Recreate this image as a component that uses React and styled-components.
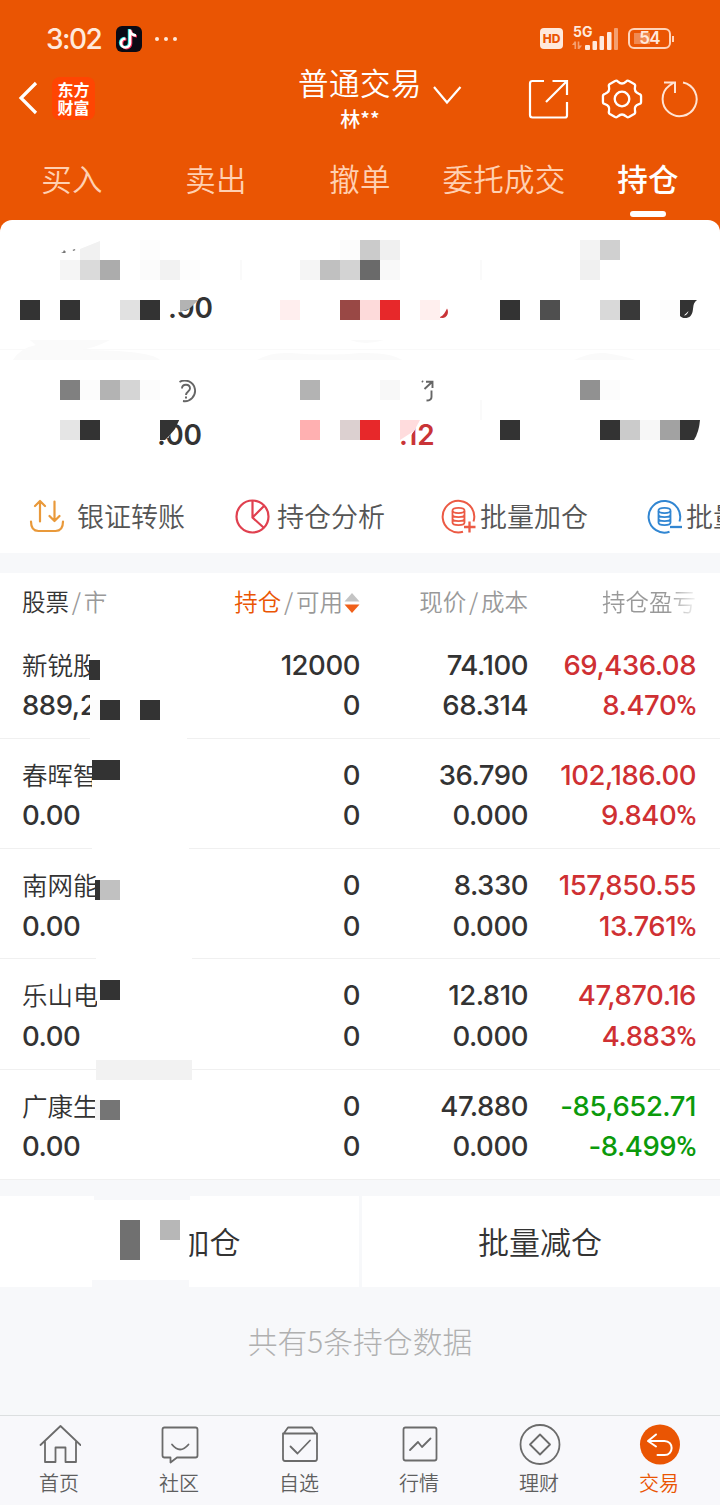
import styled, {createGlobalStyle, css} from "styled-components";
import {useState} from "react";

const GlobalStyle = createGlobalStyle`
    * {
        box-sizing: border-box;
    }

    body {
        margin: 0;
        background: #f7f8fa;
        font-family: "Noto Sans CJK SC", sans-serif;
        color: #333;
    }
`;

const ORANGE = "#ea5503";

const tabs = ["买入", "卖出", "撤单", "委托成交", "持仓"];

// c / r are cells of the 20px mosaic grid, counted from 1
const stats = [
    [
        {
            tiles: [
                {c: 5, r: 2, bg: "#f1f1f1", clip: "polygon(0 45%, 100% 5%, 100% 100%, 0 100%)"},
                {c: 8, r: 2, bg: "#fdfdfd"},
                {c: 4, r: 3, bg: "#f5f5f5"}, {c: 5, r: 3, bg: "#dadada"}, {c: 6, r: 3, bg: "#acacac"},
                {c: 8, r: 3, bg: "#fbfbfb"}, {c: 9, r: 3, bg: "#f2f2f2"}, {c: 10, r: 3, bg: "#fdfdfd"},
                {c: 2, r: 5, bg: "#333"}, {c: 4, r: 5, bg: "#333"}, {c: 7, r: 5, bg: "#e1e1e1"}, {c: 8, r: 5, bg: "#333"},
                {c: 10, r: 5, bg: "#b3b3b3", clip: "polygon(0 0, 92% 0, 45% 45%, 0 60%)"}
            ],
            specks: true,
            value: {text: ".90", c: 9, r: 5, left: 8, clip: "polygon(0 100%, 0 55%, 35% 57%, 60% 28%, 60% 0, 100% 0, 100% 100%)"}
        },
        {
            tiles: [
                {c: 6, r: 2, bg: "#fcfcfc"}, {c: 7, r: 2, bg: "#cbcbcb"}, {c: 8, r: 2, bg: "#f0f0f0"},
                {c: 4, r: 3, bg: "#f5f5f5"}, {c: 5, r: 3, bg: "#c0c0c0"}, {c: 6, r: 3, bg: "#d3d3d3"},
                {c: 7, r: 3, bg: "#6a6a6a"}, {c: 8, r: 3, bg: "#f9f9f9"},
                {c: 3, r: 5, bg: "#ffeeee"}, {c: 6, r: 5, bg: "#994845"}, {c: 7, r: 5, bg: "#fddada"},
                {c: 8, r: 5, bg: "#e7282a"}, {c: 10, r: 5, bg: "#ffefee"}
            ],
            tail: {c: 11, r: 5, d: "M-1 17.500 C3 16 5 13 7 8.500 C9 11.500 8 17 3 18 Z", fill: "#c93437"}
        },
        {
            tiles: [
                {c: 6, r: 2, bg: "#f3f3f3"}, {c: 7, r: 2, bg: "#d0d0d0"}, {c: 6, r: 3, bg: "#f0f0f0"},
                {c: 2, r: 5, bg: "#333"}, {c: 4, r: 5, bg: "#4f4f4f"}, {c: 7, r: 5, bg: "#d9d9d9"},
                {c: 8, r: 5, bg: "#393939"}, {c: 10, r: 5, bg: "#fdfdfd"}
            ],
            tail: {c: 11, r: 5, d: "M0 0 H17 C11 4 15 11 10.500 16 C7.500 19 2 18.500 0 16 Z M4 15.500 C6 15.500 8 13.500 8.500 11 C7 13 5 14 4 15.500 Z", fill: "#333"}
        }
    ],
    [
        {
            tiles: [
                {c: 4, r: 2, bg: "#808080"}, {c: 5, r: 2, bg: "#fcfcfc"}, {c: 6, r: 2, bg: "#b3b3b3"},
                {c: 7, r: 2, bg: "#d5d5d5"}, {c: 8, r: 2, bg: "#fcfcfc"},
                {c: 4, r: 4, bg: "#e5e5e5"}, {c: 5, r: 4, bg: "#333"},
                {c: 9, r: 4, bg: "#333", clip: "polygon(0 0, 96% 0, 75% 45%, 45% 80%, 25% 100%, 0 100%)"}
            ],
            icon: "help",
            value: {text: ".00", c: 8, r: 4, left: 17, clip: "polygon(0 100%, 0 60%, 25% 60%, 46% 0, 100% 0, 100% 100%)"}
        },
        {
            tiles: [
                {c: 4, r: 2, bg: "#b3b3b3"}, {c: 8, r: 2, bg: "#f8f8f8"},
                {c: 4, r: 4, bg: "#ffb0b1"}, {c: 6, r: 4, bg: "#dcd0d0"}, {c: 7, r: 4, bg: "#e7282a"},
                {c: 9, r: 4, bg: "#ffdcdd", clip: "polygon(0 0, 100% 0, 70% 55%, 0 100%)"}
            ],
            icon: "jump",
            value: {text: ".12", c: 8, r: 4, left: 19, red: true, clip: "polygon(0 100%, 0 66%, 25% 66%, 46% 30%, 46% 0, 100% 0, 100% 100%)"}
        },
        {
            tiles: [
                {c: 6, r: 2, bg: "#919191"}, {c: 7, r: 2, bg: "#fcfcfc"},
                {c: 2, r: 4, bg: "#333"}, {c: 7, r: 4, bg: "#333"}, {c: 8, r: 4, bg: "#cbcbcb"},
                {c: 9, r: 4, bg: "#f7f7f7"}, {c: 10, r: 4, bg: "#a2a2a2"}
            ],
            tail: {c: 11, r: 4, d: "M0 0 H20 Q19 12 14 20 H0 Z", fill: "#333"}
        }
    ]
];

const actions = [
    {label: "银证转账", icon: "transfer", gap: 13},
    {label: "持仓分析", icon: "pie", gap: 7},
    {label: "批量加仓", icon: "add", gap: 4},
    {label: "批量减仓", icon: "minus", gap: 4}
];

// masks: [left, top, width, height, colour] of the blocks hiding part of the first column
const holdings = [
    {
        name: "新锐股", value: "889,2", amount: "12000", usable: "0", price: "74.100", cost: "68.314", profit: "69,436.08", rate: "8.470",
        masks: [[90, 20, 97, 92, "#fff"], [89, 31, 11, 20, "#333"], [90, 71, 10, 20, "#fcfcfc"], [100, 71, 20, 20, "#333"], [140, 71, 20, 20, "#333"]]
    },
    {
        name: "春晖智", value: "0.00", amount: "0", usable: "0", price: "36.790", cost: "0.000", profit: "102,186.00", rate: "9.840",
        masks: [[92, 21, 97, 90, "#fff"], [92, 21, 28, 20, "#333"]]
    },
    {
        name: "南网能", value: "0.00", amount: "0", usable: "0", price: "8.330", cost: "0.000", profit: "157,850.55", rate: "13.761",
        masks: [[96, 21, 96, 90, "#fff"], [95, 31, 5, 20, "#333"], [100, 31, 20, 20, "#c1c1c1"]]
    },
    {
        name: "乐山电", value: "0.00", amount: "0", usable: "0", price: "12.810", cost: "0.000", profit: "47,870.16", rate: "4.883",
        masks: [[97, 20, 95, 80, "#fff"], [100, 21, 20, 20, "#333"], [96, 101, 96, 20, "#f2f2f2"]]
    },
    {
        name: "广康生", value: "0.00", amount: "0", usable: "0", price: "47.880", cost: "0.000", profit: "-85,652.71", rate: "-8.499", down: true,
        masks: [[95, 30, 5, 20, "#f5f5f5"], [100, 30, 20, 20, "#757575"], [94, 110, 96, 20, "#f7f8fa"]]
    }
];

const menu = [
    {label: "首页", icon: "home"},
    {label: "社区", icon: "chat"},
    {label: "自选", icon: "check"},
    {label: "行情", icon: "chart"},
    {label: "理财", icon: "coin"},
    {label: "交易", icon: "trade"}
];

// six teeth around the centre
const gearPath = () => {
    const pt = (deg, r) => {
        const a = deg * Math.PI / 180;
        return `${(21 + r * Math.cos(a)).toFixed(2)} ${(21 + r * Math.sin(a)).toFixed(2)}`;
    };
    let d = `M${pt(-9, 19.3)}`;
    for (let i = 0; i < 6; i++) {
        const a = i * 60;
        d += ` L${pt(a + 9, 19.3)} Q${pt(a + 14, 19.6)} ${pt(a + 17, 17.8)} Q${pt(a + 30, 13.6)} ${pt(a + 43, 17.8)} Q${pt(a + 46, 19.6)} ${pt(a + 51, 19.3)}`;
    }
    return d + "Z";
};

function StatusBar() {
    return (
        <Status>
            <Clock>3:02</Clock>
            <svg width="26" height="26" viewBox="0 0 26 26">
                <rect width="26" height="26" rx="6" fill="#0b0a14"/>
                <g fill="none" strokeWidth="2.600">
                    <path d="M14 3.500V17a4.500 4.500 0 1 1-4.500-4.500M14 4.500c.6 3 2.500 4.800 6 5" stroke="#25e5e0" transform="translate(-.9 -.4)"/>
                    <path d="M14 3.500V17a4.500 4.500 0 1 1-4.500-4.500M14 4.500c.6 3 2.500 4.800 6 5" stroke="#f5305c" transform="translate(1 .7)"/>
                    <path d="M14 3.500V17a4.500 4.500 0 1 1-4.500-4.500M14 4.500c.6 3 2.500 4.800 6 5" stroke="#fff"/>
                </g>
            </svg>
            <Dots><i/><i/><i/></Dots>
            <Spacer/>
            <HdBadge>HD</HdBadge>
            <Network>
                <b>5G</b>
                <svg width="46" height="24" viewBox="0 0 46 24" fill="#ffe9dc">
                    <g opacity=".5">
                        <path d="M2.500 14.500h1.600v7.500H2.500zM0 18l3-4v4zM5.700 14.500h1.600v7.500H5.700zM7 18.500h3l-3 4z"/>
                        <rect x="42" y="1" width="4" height="22" rx="1"/>
                    </g>
                    <rect x="13" y="18" width="5" height="5" rx="1"/>
                    <rect x="20.500" y="14" width="4.500" height="9" rx="1"/>
                    <rect x="27.500" y="9" width="4.500" height="14" rx="1"/>
                    <rect x="35" y="5" width="4.500" height="18" rx="1"/>
                </svg>
            </Network>
            <Battery><span>54</span></Battery>
        </Status>
    );
}

function ActionIcon({name}) {
    if (name === "transfer") {
        return (
            <svg width="36" height="36" viewBox="0 0 36 36" fill="none" stroke="#e9993a" strokeWidth="2.200" strokeLinecap="round" strokeLinejoin="round">
                <path d="M11 22.500V2.500M6 7l5-5 5 5M25.500 2.500v19M20.500 17l5 5 5-5"/>
                <path d="M2 22.500c0 6 2.500 9.500 7.500 9.500h17c5 0 7.500-3.500 7.500-9.500"/>
            </svg>
        );
    }
    if (name === "pie") {
        return (
            <svg width="36" height="36" viewBox="0 0 36 36" fill="none" stroke="#e0404f" strokeWidth="2.200">
                <circle cx="17.500" cy="17.500" r="16"/>
                <path d="M17.500 2v16.500L28.500 28.500M17.500 18.500L29 7"/>
            </svg>
        );
    }
    const color = name === "add" ? "#ec5a44" : "#3186d2";
    return (
        <svg width="36" height="36" viewBox="0 0 36 36" fill="none" stroke={color} strokeWidth="2">
            <path d={name === "add" ? "M32.500 22.500A15.800 15.800 0 1 0 22 32.800" : "M32.500 22.500A15.800 15.800 0 1 0 22.500 32.800"}/>
            <g strokeWidth="1.800">
                <ellipse cx="17.500" cy="11.500" rx="6" ry="2.600"/>
                <path d="M11.500 12v11.500c0 3.500 12 3.500 12 0V12M11.500 15.500c0 3.500 12 3.500 12 0M11.500 19.500c0 3.500 12 3.500 12 0"/>
            </g>
            {name === "add" ? <path d="M28.500 22.500v11M23 28h11.500" strokeWidth="2.300"/> : <path d="M23 28h12" strokeWidth="2.300"/>}
        </svg>
    );
}

function MenuIcon({name}) {
    const paths = {
        home: <path d="M1.500 22L21.500 3l20 19M6 18.500V39h10.500V24.500h10V39H37V18.500"/>,
        chat: <path d="M5.500 4.500h31q2 0 2 2v26q0 2-2 2H18l-6.500 5v-5h-6q-2 0-2-2v-26q0-2 2-2zM13 21.500q8 10 16.500 0"/>,
        check: <path d="M4 11.500l5-7h24l5 7M4 10.500h34M4 10.500v25q0 2.500 2 2.500h30q2 0 2-2.500v-25M11.500 23.500l7 7L31 17.500"/>,
        chart: <path d="M6.500 4.500h29q2 0 2 2v29q0 2-2 2h-29q-2 0-2-2v-29q0-2 2-2zM11 27l8-8 4 5 8.500-8.500"/>,
        coin: <path d="M21 2a19.200 19.200 0 1 1 0 39 19.200 19.200 0 1 1 0-39M21 11.500L31 21.500 21 31.500 11 21.500z"/>
    };
    if (name === "trade") {
        return (
            <svg width="42" height="42" viewBox="0 0 42 42" fill="none" stroke="#fff" strokeWidth="2" strokeLinecap="round" strokeLinejoin="round">
                <circle cx="21" cy="21.500" r="20" fill={ORANGE} stroke="none"/>
                <path d="M17 11.500l-8 6.500 8 5.500M10 18h15.500c9.500 0 9.500 14 0 14H18.500"/>
            </svg>
        );
    }
    return (
        <svg width="42" height="42" viewBox="0 0 42 42" fill="none" stroke="#6b6b6b" strokeWidth="1.800" strokeLinejoin="round" strokeLinecap="round">
            {paths[name]}
        </svg>
    );
}

function Stat({stat, split}) {
    const {tiles, value, tail, icon, specks} = stat;
    return (
        <StatGrid>
            {split && <Split/>}
            {value && <StatValue $c={value.c} $r={value.r} $left={value.left} $red={value.red} $clip={value.clip}>{value.text}</StatValue>}
            {tiles.map((t, idx) => <Tile key={idx} $c={t.c} $r={t.r} $bg={t.bg} $clip={t.clip}/>)}
            {tail && <Cell $c={tail.c} $r={tail.r}>
                <svg width="20" height="20" viewBox="0 0 20 20"><path d={tail.d} fill={tail.fill} fillRule="evenodd"/></svg>
            </Cell>}
            {specks && <Cell $c={4} $r={2}>
                <svg width="20" height="20" viewBox="0 0 20 20"><path d="M1 13l2-1 1-2 2 2-1 1zM12.500 10l2-1 1 1-2 1z" fill="#777"/></svg>
            </Cell>}
            {icon === "help" && <Cell $c={9} $r={2}>
                <svg width="38" height="24" viewBox="0 0 38 24" fill="none" stroke="#666" strokeWidth="1.900">
                    <path d="M19.500 2A10.300 10.300 0 1 1 23 21"/>
                    <path d="M22 8.500c0-5 8-5 8 0 0 3-4 3-4 6.500"/>
                    <path d="M25 17.500h2"/>
                </svg>
            </Cell>}
            {icon === "jump" && <Cell $c={10} $r={2}>
                <svg width="20" height="24" viewBox="0 0 20 24" fill="none" stroke="#666" strokeWidth="1.900">
                    <path d="M4.500 9l7.500-7M6 1.800h6.500V8M11.500 10.500v6.500q0 3.500-5 3.500M2 1l1 1"/>
                </svg>
            </Cell>}
        </StatGrid>
    );
}

export default function App() {
    const [tab, setTab] = useState("持仓");
    const [page, setPage] = useState("交易");
    return (
        <Phone>
            <GlobalStyle/>
            <Header>
                <StatusBar/>
                <NavBar>
                    <NavSide>
                        <svg width="20" height="34" viewBox="0 0 20 34" fill="none" stroke="#fff" strokeWidth="3.200">
                            <path d="M18 2L3 17l15 15"/>
                        </svg>
                        <Logo><span>东方</span><span>财富</span></Logo>
                    </NavSide>
                    <Account>
                        <div>
                            <h1>普通交易</h1>
                            <p>林**</p>
                        </div>
                        <svg width="30" height="20" viewBox="0 0 30 20" fill="none" stroke="#fff" strokeWidth="2.200">
                            <path d="M2 2l13 15.500L28.500 2"/>
                        </svg>
                    </Account>
                    <NavSide $end>
                        <svg width="42" height="42" viewBox="0 0 42 42" fill="none" stroke="#fff" strokeWidth="2.200">
                            <path d="M17 3H5.500Q3 3 3 5.500V37q0 2.500 2.500 2.500H38q2 0 2-2V24M25.500 3H40v14M40 3L19 24"/>
                        </svg>
                        <svg width="42" height="42" viewBox="0 0 42 42" fill="none" stroke="#fff" strokeWidth="2.300" strokeLinejoin="round">
                            <path d={gearPath()}/>
                            <circle cx="21" cy="21" r="7.300"/>
                        </svg>
                        <svg width="38" height="42" viewBox="0 0 38 42" fill="none" stroke="#ffe3d3" strokeWidth="2">
                            <path d="M23 4.500A17 17 0 1 1 9.500 7.500L14 4.500M4 4.500h11V15"/>
                        </svg>
                    </NavSide>
                </NavBar>
                <Tabs>
                    {tabs.map((t) => (
                        <Tab key={t} $active={t === tab} onClick={() => setTab(t)}>{t}</Tab>
                    ))}
                </Tabs>
            </Header>
            <Summary>
                {stats.map((row, idx) => (
                    <StatRow key={idx} $last={idx === 1}>
                        {row.map((stat, i) => <Stat key={i} stat={stat} split={idx === 0 ? i > 0 : i > 1}/>)}
                    </StatRow>
                ))}
                <Smudges width="720" height="20" viewBox="0 0 720 20" fill="#fafafa">
                    <path d="M30 0H110Q95 8 80 10Q150 10 160 20H13Q20 8 36 5Z"/>
                    <path d="M257 20Q270 12 290 13Q330 16 360 13Q390 12 402 20ZM350 0H384Q365 6 350 0Z"/>
                    <path d="M574 20Q590 12 605 13Q625 16 635 20Z"/>
                </Smudges>
            </Summary>
            <Actions>
                {actions.map((a) => (
                    <Action key={a.label} $gap={a.gap}>
                        <ActionIcon name={a.icon}/>
                        <span>{a.label}</span>
                    </Action>
                ))}
            </Actions>
            <Table>
                <TableHead>
                    <HeadCell $left><em>股票</em><i>/</i><Cut>市</Cut></HeadCell>
                    <HeadCell><strong>持仓</strong><i>/</i>可用
                        <svg width="16" height="20" viewBox="0 0 16 20">
                            <path d="M8 0l7.500 8.500H.5z" fill="#c4c4c4"/>
                            <path d="M8 20l7.500-8.500H.5z" fill="#f0601a"/>
                        </svg>
                    </HeadCell>
                    <HeadCell>现价<i>/</i>成本</HeadCell>
                    <HeadCell><Fade>持仓盈亏</Fade></HeadCell>
                </TableHead>
                {holdings.map((h) => (
                    <Row key={h.name}>
                        <Pair $left><Name>{h.name}</Name><span>{h.value}</span></Pair>
                        <Pair><span>{h.amount}</span><span>{h.usable}</span></Pair>
                        <Pair><span>{h.price}</span><span>{h.cost}</span></Pair>
                        <Pair $color={h.down ? "#0b9a0b" : "#cf3033"}><span>{h.profit}</span><span>{h.rate}<Percent>%</Percent></span></Pair>
                        {h.masks.map(([x, y, w, hh, bg]) => <Mask key={`${x}-${y}-${w}`} $x={x} $y={y} $w={w} $h={hh} $bg={bg}/>)}
                    </Row>
                ))}
            </Table>
            <Buttons>
                <BigButton>
                    <Clipped>批量加仓</Clipped>
                    <Mask $x={120} $y={24} $w={20} $h={40} $bg="#707070"/>
                    <Mask $x={160} $y={24} $w={20} $h={20} $bg="#b7b7b7"/>
                    <Mask $x={92} $y={84} $w={97} $h={7} $bg="#f7f8fa"/>
                </BigButton>
                <BigButton>批量减仓</BigButton>
            </Buttons>
            <Total>共有5条持仓数据</Total>
            <Menu>
                {menu.map((m) => (
                    <MenuItem key={m.label} $active={m.label === page} onClick={() => setPage(m.label)}>
                        <MenuIcon name={m.icon}/>
                        <span>{m.label}</span>
                    </MenuItem>
                ))}
            </Menu>
        </Phone>
    );
}

const Phone = styled.div`
    width: 720px;
    height: 1505px;
    display: flex;
    flex-direction: column;
    overflow: hidden;
    background: #f7f8fa;
`;

const Header = styled.header`
    height: 232px;
    flex: none;
    background: ${ORANGE};
    color: #fff;
`;

const Status = styled.div`
    height: 66px;
    padding: 12px 49px 0 46px;
    display: flex;
    align-items: center;
    color: #ffe9dc;
`;

const Clock = styled.span`
    width: 70px;
    font: 500 28px "Inter", sans-serif;
    letter-spacing: -1.5px;
`;

const Dots = styled.div`
    display: flex;
    gap: 5px;
    margin-left: 13px;

    i {
        width: 4px;
        height: 4px;
        border-radius: 50%;
        background: #ffe9dc;
    }
`;

const Spacer = styled.div`
    flex: 1;
`;

const HdBadge = styled.div`
    width: 23px;
    height: 21px;
    margin-top: -1px;
    border-radius: 4px;
    background: #ffe9dc;
    color: ${ORANGE};
    font: 800 12px/21px "Inter", sans-serif;
    text-align: center;
`;

const Network = styled.div`
    position: relative;
    height: 24px;
    margin: 0 10px 0 9px;

    b {
        position: absolute;
        left: 1px;
        top: -3px;
        font: 700 14px/16px "Inter", sans-serif;
    }
`;

const Battery = styled.div`
    position: relative;
    width: 43px;
    height: 21px;
    margin-top: -1px;
    border: 2px solid #ffd3b9;
    border-radius: 6px;
    display: flex;
    align-items: center;
    justify-content: center;
    background: linear-gradient(90deg, #f08a52 0 50%, transparent 50%) 4px 3px / 32px 11px no-repeat;
    font: 600 17px/17px "Inter", sans-serif;
    letter-spacing: -0.8px;

    &::after {
        content: "";
        position: absolute;
        right: -5px;
        top: 6px;
        width: 2px;
        height: 6px;
        background: #ffd3b9;
    }
`;

const NavBar = styled.div`
    height: 66px;
    display: grid;
    grid-template-columns: 240px 1fr 200px;
    grid-template-rows: 66px;
    align-items: center;
`;

const NavSide = styled.div`
    display: flex;
    align-items: center;
    padding-left: ${(p) => p.$end ? "7px" : "18px"};
    margin-top: ${(p) => p.$end ? "0" : "-2px"};
    gap: ${(p) => p.$end ? "0" : "14px"};

    svg + svg {
        margin-left: 32px;
    }

    svg + svg + svg {
        margin-left: 17px;
    }
`;

const Logo = styled.div`
    width: 43px;
    height: 43px;
    border-radius: 8px;
    background: #ff4502;
    display: flex;
    flex-direction: column;
    align-items: center;
    justify-content: center;
    padding-bottom: 1px;
    font-size: 16px;
    font-weight: 700;
    line-height: 18px;
`;

const Account = styled.div`
    display: flex;
    justify-content: center;
    margin-top: -4px;
    gap: 10px;
    text-align: center;

    h1 {
        margin: 0;
        font-size: 30.500px;
        font-weight: 350;
        line-height: 44px;
        letter-spacing: 0.5px;
    }

    p {
        margin: 0;
        font-size: 20px;
        font-weight: 500;
        line-height: 30px;
    }

    svg {
        margin-top: 25px;
    }
`;

const Tabs = styled.nav`
    display: grid;
    grid-template-columns: repeat(5, 1fr);
    height: 88px;
`;

const Tab = styled.button`
    display: flex;
    flex-direction: column;
    align-items: center;
    border: 0;
    padding: 24px 0 0;
    background: none;
    color: #ffd0b2;
    font: 350 30.500px/44px "Noto Sans CJK SC", sans-serif;
    letter-spacing: 0.3px;
    ${(p) => p.$active && css`
        color: #fff;
        font-weight: 500;

        &::after {
            content: "";
            width: 36px;
            height: 6px;
            margin-top: 11px;
            border-radius: 3px;
            background: #fff;
        }
    `}
`;

const Summary = styled.section`
    position: relative;
    height: 260px;
    flex: none;
    margin-top: -12px;
    background: #fff;
    border-radius: 12px 12px 0 0;
`;

const StatRow = styled.div`
    display: flex;
    height: 130px;
    padding-top: ${(p) => p.$last ? "10px" : "0"};
    border-bottom: ${(p) => p.$last ? "0" : "1px solid #f9f9f9"};
`;

const StatGrid = styled.div`
    width: 240px;
    display: grid;
    grid-template-columns: repeat(12, 20px);
    grid-template-rows: repeat(6, 20px);
`;

const Cell = styled.div`
    grid-column: ${(p) => p.$c};
    grid-row: ${(p) => p.$r};

    svg {
        display: block;
    }
`;

const Tile = styled(Cell)`
    background: ${(p) => p.$bg};
    clip-path: ${(p) => p.$clip || "none"};
`;

const Split = styled.div`
    grid-column: 1;
    grid-row: 3;
    width: 2px;
    background: #fafafa;
`;

const StatValue = styled.div`
    grid-column: ${(p) => p.$c} / span 4;
    grid-row: ${(p) => p.$r};
    justify-self: start;
    height: 30px;
    margin: ${(p) => p.$r === 4 ? 0 : -7}px 0 0 ${(p) => p.$left}px;
    color: ${(p) => p.$red ? "#c93437" : "#333"};
    font: 600 28px/30px "Inter", sans-serif;
    clip-path: ${(p) => p.$clip};
`;

const Smudges = styled.svg`
    position: absolute;
    left: 0;
    top: 120px;
`;

const Actions = styled.div`
    display: flex;
    height: 73px;
    flex: none;
    padding-left: 29px;
    background: #fff;
    overflow: hidden;
`;

const Action = styled.div`
    width: 206px;
    flex: none;
    display: flex;
    align-items: center;
    gap: ${(p) => p.$gap - 1}px;
    color: #555;
    font-size: 27px;
    font-weight: 350;
    line-height: 71px;
    white-space: nowrap;

    span {
        margin-top: -2px;
    }
`;

const Table = styled.section`
    margin-top: 20px;
    background: #fff;
`;

const TableHead = styled.div`
    height: 55.700px;
    display: grid;
    grid-template-columns: 170px repeat(3, 168px);
    padding: 0 24px 0 22px;
`;

const HeadCell = styled.div`
    display: flex;
    justify-content: ${(p) => p.$left ? "flex-start" : "flex-end"};
    align-items: center;
    height: 55px;
    color: #999;
    font-size: 23.500px;
    font-weight: 350;
    white-space: nowrap;

    em, strong {
        font-style: normal;
        font-weight: 350;
        color: #333;
    }

    strong {
        color: ${ORANGE};
    }

    i {
        font-style: normal;
        margin: 0 2.800px;
    }

    svg {
        margin: 4px 0 0 1px;
    }
`;

const Cut = styled.span`
    clip-path: polygon(0 0, 100% 0, 100% 50%, 60% 60%, 60% 100%, 0 100%);
`;

const Fade = styled.span`
    background: linear-gradient(90deg, #999 70%, #eee 98%);
    background-clip: text;
    color: transparent;
`;

const Row = styled.div`
    position: relative;
    height: 110.250px;
    display: grid;
    grid-template-columns: 170px repeat(3, 168px);
    padding: 16px 24px 0 22px;
    border-bottom: 1px solid #f0f0f0;
`;

const Pair = styled.div`
    display: flex;
    flex-direction: column;
    align-items: ${(p) => p.$left ? "flex-start" : "flex-end"};
    color: ${(p) => p.$color || "#333"};
    font: 550 27.500px/40.500px "Inter", sans-serif;
    letter-spacing: -0.450px;
    white-space: nowrap;
`;

const Percent = styled.span`
    font-family: "Roboto", sans-serif;
    font-size: 27.500px;
    font-weight: 500;
    line-height: 1;
`;

const Name = styled.span`
    margin-top: -1px;
    padding-bottom: 1px;
    font-family: "Noto Sans CJK SC", sans-serif;
    font-size: 25.500px;
    font-weight: 350;
    letter-spacing: 0;
`;

const Mask = styled.div`
    position: absolute;
    left: ${(p) => p.$x}px;
    top: ${(p) => p.$y}px;
    width: ${(p) => p.$w}px;
    height: ${(p) => p.$h}px;
    background: ${(p) => p.$bg};
    z-index: 1;
`;

const Buttons = styled.div`
    display: grid;
    grid-template-columns: 359px 358px;
    gap: 3px;
    height: 91px;
    flex: none;
    margin-top: 16px;
`;

const BigButton = styled.button`
    position: relative;
    border: 0;
    padding: 0 2px 2px 0;
    background: #fff;
    color: #333;
    font: 350 31px/89px "Noto Sans CJK SC", sans-serif;
`;

const Clipped = styled.span`
    display: inline-block;
    clip-path: inset(0 0 0 73px);
`;

const Total = styled.p`
    margin: 0;
    padding-top: 31px;
    flex: 1;
    text-align: center;
    color: #b0b0b0;
    font-size: 29.800px;
    font-weight: 300;
    line-height: 44px;
`;

const Menu = styled.nav`
    display: grid;
    grid-template-columns: repeat(6, 1fr);
    height: 90px;
    flex: none;
    border-top: 1px solid #dcdfe0;
    background: #f8f8fb;
`;

const MenuItem = styled.button`
    display: flex;
    flex-direction: column;
    align-items: center;
    border: 0;
    padding: 7px 0 0;
    background: none;
    color: ${(p) => p.$active ? ORANGE : "#5f5f5f"};
    font: 350 20px/36px "Noto Sans CJK SC", sans-serif;

    span {
        margin-right: 2px;
    }
`;
